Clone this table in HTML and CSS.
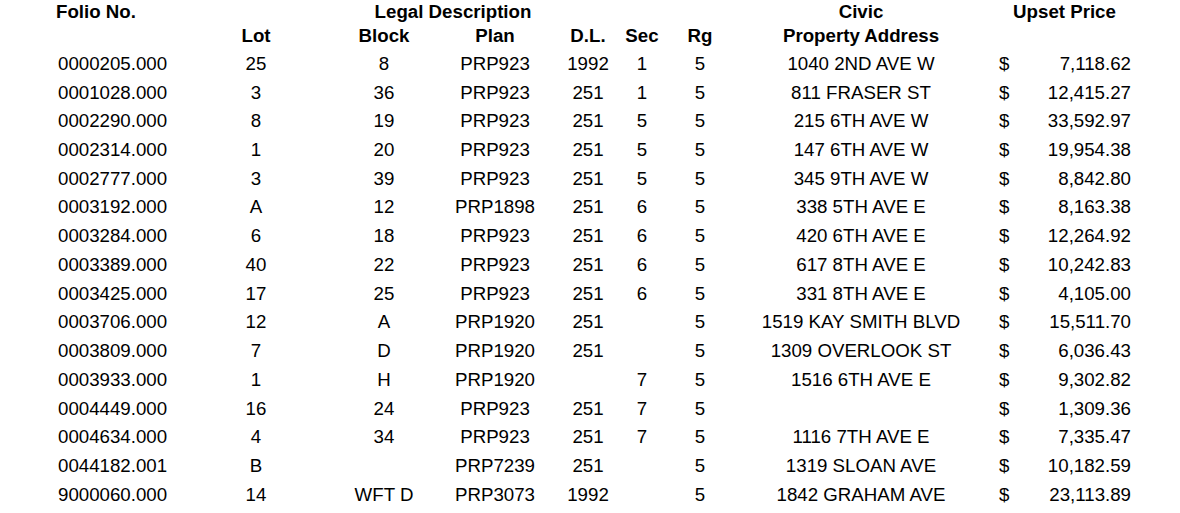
FILE: index.html
```html
<!DOCTYPE html>
<html lang="en">
<head>
<meta charset="utf-8">
<title>Upset Price List</title>
<link rel="stylesheet" href="styles.css">
</head>
<body>
<div class="sheet">
  <div class="row head">
    <div class="c-folio h-folio">Folio No.</div>
    <div class="c-legal">Legal Description</div>
    <div class="c-civic">Civic</div>
    <div class="c-upset">Upset Price</div>
  </div>
  <div class="row head">
    <div class="c-lot">Lot</div>
    <div class="c-block">Block</div>
    <div class="c-plan">Plan</div>
    <div class="c-dl">D.L.</div>
    <div class="c-sec">Sec</div>
    <div class="c-rg">Rg</div>
    <div class="c-addr">Property Address</div>
  </div>
  <div class="rows">
    <div class="row"><div class="c-folio">0000205.000</div><div class="c-lot">25</div><div class="c-block">8</div><div class="c-plan">PRP923</div><div class="c-dl">1992</div><div class="c-sec">1</div><div class="c-rg">5</div><div class="c-addr">1040 2ND AVE W</div><div class="c-cur">$</div><div class="c-price">7,118.62</div></div>
    <div class="row"><div class="c-folio">0001028.000</div><div class="c-lot">3</div><div class="c-block">36</div><div class="c-plan">PRP923</div><div class="c-dl">251</div><div class="c-sec">1</div><div class="c-rg">5</div><div class="c-addr">811 FRASER ST</div><div class="c-cur">$</div><div class="c-price">12,415.27</div></div>
    <div class="row"><div class="c-folio">0002290.000</div><div class="c-lot">8</div><div class="c-block">19</div><div class="c-plan">PRP923</div><div class="c-dl">251</div><div class="c-sec">5</div><div class="c-rg">5</div><div class="c-addr">215 6TH AVE W</div><div class="c-cur">$</div><div class="c-price">33,592.97</div></div>
    <div class="row"><div class="c-folio">0002314.000</div><div class="c-lot">1</div><div class="c-block">20</div><div class="c-plan">PRP923</div><div class="c-dl">251</div><div class="c-sec">5</div><div class="c-rg">5</div><div class="c-addr">147 6TH AVE W</div><div class="c-cur">$</div><div class="c-price">19,954.38</div></div>
    <div class="row"><div class="c-folio">0002777.000</div><div class="c-lot">3</div><div class="c-block">39</div><div class="c-plan">PRP923</div><div class="c-dl">251</div><div class="c-sec">5</div><div class="c-rg">5</div><div class="c-addr">345 9TH AVE W</div><div class="c-cur">$</div><div class="c-price">8,842.80</div></div>
    <div class="row"><div class="c-folio">0003192.000</div><div class="c-lot">A</div><div class="c-block">12</div><div class="c-plan">PRP1898</div><div class="c-dl">251</div><div class="c-sec">6</div><div class="c-rg">5</div><div class="c-addr">338 5TH AVE E</div><div class="c-cur">$</div><div class="c-price">8,163.38</div></div>
    <div class="row"><div class="c-folio">0003284.000</div><div class="c-lot">6</div><div class="c-block">18</div><div class="c-plan">PRP923</div><div class="c-dl">251</div><div class="c-sec">6</div><div class="c-rg">5</div><div class="c-addr">420 6TH AVE E</div><div class="c-cur">$</div><div class="c-price">12,264.92</div></div>
    <div class="row"><div class="c-folio">0003389.000</div><div class="c-lot">40</div><div class="c-block">22</div><div class="c-plan">PRP923</div><div class="c-dl">251</div><div class="c-sec">6</div><div class="c-rg">5</div><div class="c-addr">617 8TH AVE E</div><div class="c-cur">$</div><div class="c-price">10,242.83</div></div>
    <div class="row"><div class="c-folio">0003425.000</div><div class="c-lot">17</div><div class="c-block">25</div><div class="c-plan">PRP923</div><div class="c-dl">251</div><div class="c-sec">6</div><div class="c-rg">5</div><div class="c-addr">331 8TH AVE E</div><div class="c-cur">$</div><div class="c-price">4,105.00</div></div>
    <div class="row"><div class="c-folio">0003706.000</div><div class="c-lot">12</div><div class="c-block">A</div><div class="c-plan">PRP1920</div><div class="c-dl">251</div><div class="c-sec"></div><div class="c-rg">5</div><div class="c-addr">1519 KAY SMITH BLVD</div><div class="c-cur">$</div><div class="c-price">15,511.70</div></div>
    <div class="row"><div class="c-folio">0003809.000</div><div class="c-lot">7</div><div class="c-block">D</div><div class="c-plan">PRP1920</div><div class="c-dl">251</div><div class="c-sec"></div><div class="c-rg">5</div><div class="c-addr">1309 OVERLOOK ST</div><div class="c-cur">$</div><div class="c-price">6,036.43</div></div>
    <div class="row"><div class="c-folio">0003933.000</div><div class="c-lot">1</div><div class="c-block">H</div><div class="c-plan">PRP1920</div><div class="c-dl"></div><div class="c-sec">7</div><div class="c-rg">5</div><div class="c-addr">1516 6TH AVE E</div><div class="c-cur">$</div><div class="c-price">9,302.82</div></div>
    <div class="row"><div class="c-folio">0004449.000</div><div class="c-lot">16</div><div class="c-block">24</div><div class="c-plan">PRP923</div><div class="c-dl">251</div><div class="c-sec">7</div><div class="c-rg">5</div><div class="c-addr"></div><div class="c-cur">$</div><div class="c-price">1,309.36</div></div>
    <div class="row"><div class="c-folio">0004634.000</div><div class="c-lot">4</div><div class="c-block">34</div><div class="c-plan">PRP923</div><div class="c-dl">251</div><div class="c-sec">7</div><div class="c-rg">5</div><div class="c-addr">1116 7TH AVE E</div><div class="c-cur">$</div><div class="c-price">7,335.47</div></div>
    <div class="row"><div class="c-folio">0044182.001</div><div class="c-lot">B</div><div class="c-block"></div><div class="c-plan">PRP7239</div><div class="c-dl">251</div><div class="c-sec"></div><div class="c-rg">5</div><div class="c-addr">1319 SLOAN AVE</div><div class="c-cur">$</div><div class="c-price">10,182.59</div></div>
    <div class="row"><div class="c-folio">9000060.000</div><div class="c-lot">14</div><div class="c-block">WFT D</div><div class="c-plan">PRP3073</div><div class="c-dl">1992</div><div class="c-sec"></div><div class="c-rg">5</div><div class="c-addr">1842 GRAHAM AVE</div><div class="c-cur">$</div><div class="c-price">23,113.89</div></div>
  </div>
</div>
</body>
</html>
```
FILE: styles.css
```css
html, body {
  margin: 0;
  padding: 0;
  background: #fff;
}

body {
  font-family: "Liberation Sans", Arial, sans-serif;
  font-size: 18.7px;
  color: #000;
}

.sheet {
  width: 1180px;
}

.row {
  display: grid;
  grid-template-columns: 173px 166px 90px 132px 54px 54px 62px 260px 40px 100px;
  height: 28.73px;
  line-height: 28.73px;
  white-space: nowrap;
}

.row > div {
  text-align: center;
}

.head {
  height: 24px;
  line-height: 24px;
  font-weight: bold;
}

.rows {
  padding-top: 1.9px;
}

.c-folio { grid-column: 1; text-align: left !important; padding-left: 58px; }
.h-folio { padding-left: 56px; }
.c-lot { grid-column: 2; }
.c-block { grid-column: 3; }
.c-plan { grid-column: 4; }
.c-dl { grid-column: 5; }
.c-sec { grid-column: 6; }
.c-rg { grid-column: 7; }
.c-addr { grid-column: 8; }
.c-cur { grid-column: 9; text-align: left !important; padding-left: 8px; }
.c-price { grid-column: 10; text-align: right !important; }

.c-legal { grid-column: 3 / span 2; padding-left: 6px; }
.c-civic { grid-column: 8; }
.c-upset { grid-column: 9 / span 2; padding-left: 7px; }
```
